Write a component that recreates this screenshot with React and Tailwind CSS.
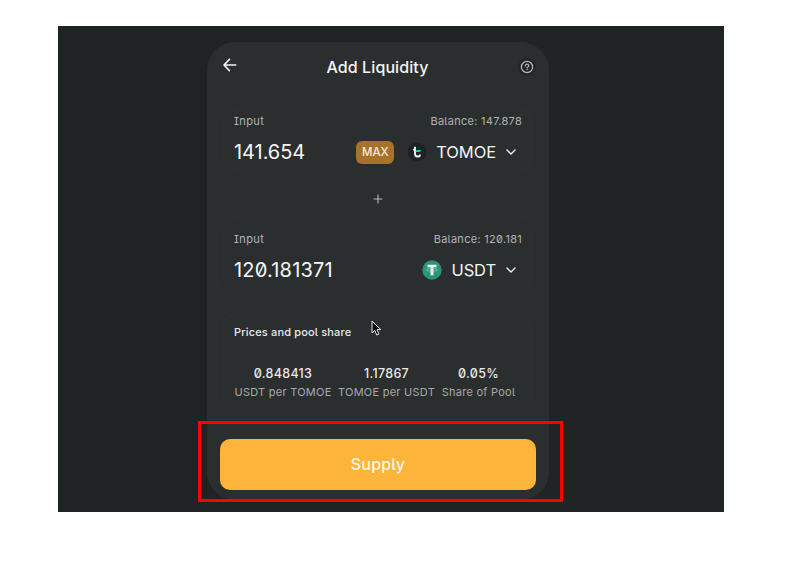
const BackArrow = () => (
  <svg width="14" height="14" viewBox="0 0 14 14" fill="none" stroke="#f3f4f4" strokeWidth="1.6" strokeLinecap="round" strokeLinejoin="round">
    <path d="M12.7 7H1.2M6.4 1.4L1 7l5.4 5.6" />
  </svg>
);

const HelpIcon = () => (
  <svg width="20" height="20" viewBox="0 0 20 20" fill="none" stroke="#b4b7b7" strokeWidth="1.2" strokeLinecap="round">
    <circle cx="10" cy="10" r="9" fill="#232627" stroke="none" />
    <circle cx="10" cy="10" r="5.6" />
    <path d="M8.4 8.8c0-2.2 3.3-2.1 3.3-.1 0 1.3-1.6 1.3-1.6 2.3M10.1 12.7v.1" />
  </svg>
);

const Chevron = () => (
  <svg width="10" height="6" viewBox="0 0 10 6" fill="none" stroke="#eceded" strokeWidth="1.4" strokeLinecap="round" strokeLinejoin="round">
    <path d="M1 1l4 4 4-4" />
  </svg>
);

const TomoeLogo = () => (
  <svg width="20" height="20" viewBox="0 0 20 20" fill="none">
    <circle cx="10" cy="10" r="9.5" fill="#1e2222" />
    <path d="M8 4.8v7c0 1.9.8 2.7 2.4 2.7h.8c1.3 0 1.8-.7 1.8-2" stroke="#f1f5f4" strokeWidth="1.9" />
    <path d="M6 7.7h2.4" stroke="#f1f5f4" strokeWidth="1.6" />
    <path d="M8.6 9.9c.3-1.4.9-1.9 1.9-1.9h3.5c-.2 1.4-.9 1.9-1.9 1.9z" fill="#14d3a2" />
  </svg>
);

const TetherLogo = () => (
  <svg width="20" height="20" viewBox="0 0 20 20" fill="none">
    <circle cx="10" cy="10" r="9.7" fill="#289777" />
    <path d="M5.5 4.8h9v2.5h-3v7.9h-3V7.3h-3z" fill="#f4faf8" />
    <ellipse cx="10" cy="9.9" rx="5.8" ry="1.3" stroke="#a3d0c1" strokeWidth=".6" />
  </svg>
);

const Pointer = () => (
  <svg width="11" height="17" viewBox="0 0 11 17">
    <path d="M1 1v12l2.8-2.6 1.9 4.6 2.2-.9-1.9-4.5h3.8z" fill="#070808" stroke="#e6e6e6" strokeWidth="1" strokeLinejoin="round" />
  </svg>
);

function TokenPanel({ balance, amount, amountClass, children }) {
  return (
    <section className="flex h-[72px] flex-col rounded-[16px] border border-[#292c2d] px-[13px]">
      <div className="mt-2 flex h-4 items-center justify-between text-[11px] text-[#afb2b3]">
        <span className="tracking-[0.4px]">Input</span>
        <span className="tracking-[0.28px]">{balance}</span>
      </div>
      <div className="mt-[11px] flex h-6 items-center justify-between">
        <span className={`text-[20px] text-[#f6f7f7] ${amountClass}`}>{amount}</span>
        <div className="flex items-center pr-1.5">{children}</div>
      </div>
    </section>
  );
}

function Stat({ value, label, className }) {
  return (
    <div className={`flex flex-col items-center whitespace-nowrap ${className}`}>
      <span className="text-[12.5px] leading-[18px] font-medium tracking-[0.3px] text-[#e9eaea]">{value}</span>
      <span className="text-[11px] leading-[18px] tracking-[0.25px] text-[#a6a9aa]">{label}</span>
    </div>
  );
}

export default function App() {
  return (
    <div className="h-[566px] w-[785px] overflow-hidden bg-white pt-[26px] pl-[58px] font-['Inter',sans-serif] [font-feature-settings:'zero','cv05','cv08']">
      <main className="relative h-[486px] w-[666px] bg-[#1f2323] pt-4 pl-[149px]">
        <div className="flex h-[458px] w-[342px] flex-col rounded-[28px] bg-[#2b2e2f] px-[13px]">
          <header className="-mr-px flex h-[49px] items-center justify-between pl-[3px]">
            <span className="-mt-1 w-4"><BackArrow /></span>
            <h1 className="mr-px text-[16px] font-medium tracking-[0.1px] text-[#f3f4f4]">Add Liquidity</h1>
            <HelpIcon />
          </header>

          <div className="mt-[13px]">
            <TokenPanel balance="Balance: 147.878" amount="141.654" amountClass="tracking-[-0.05px]">
              <span className="flex h-[23px] w-[38px] items-center justify-center rounded-[6px] bg-[#a8722b] pt-px text-[11.5px] font-medium text-[#f7ead8]">MAX</span>
              <span className="ml-[13px]"><TomoeLogo /></span>
              <span className="ml-[9px] text-[16.5px] tracking-[-0.1px] text-[#f3f4f4]">TOMOE</span>
              <span className="ml-2.5"><Chevron /></span>
            </TokenPanel>
          </div>

          <div className="flex h-[46px] items-center justify-center">
            <svg width="10" height="10" viewBox="0 0 10 10" stroke="#b4b7b7" strokeWidth="1.1"><path d="M5 .6v8.8M.6 5h8.8" /></svg>
          </div>

          <TokenPanel balance="Balance: 120.181" amount="120.181371" amountClass="tracking-[0.2px]">
            <TetherLogo />
            <span className="ml-[9px] text-[16.5px] tracking-[-0.1px] text-[#f3f4f4]">USDT</span>
            <span className="ml-2.5"><Chevron /></span>
          </TokenPanel>

          <section className="mt-[17px] flex h-[102px] flex-col rounded-[16px] border border-[#292c2d] px-[13px]">
            <h2 className="mt-3 text-[11px] leading-4 font-medium tracking-[0.16px] text-[#e9eaea]">Prices and pool share</h2>
            <div className="mt-[25px] flex">
              <Stat value="0.848413" label="USDT per TOMOE" className="w-[98px]" />
              <Stat value="1.17867" label="TOMOE per USDT" className="w-[109px]" />
              <Stat value="0.05%" label="Share of Pool" className="w-[75px]" />
            </div>
          </section>

          <button className="mt-[26px] h-[51px] rounded-[10px] bg-[#fdb43a] pb-0.5 text-[16px] font-medium tracking-[0.2px] text-[#fff6e4]">Supply</button>
        </div>

        <div className="absolute top-[395px] left-[140px] h-[81px] w-[365px] rounded-[1px] border-[3px] border-[#fe0000]" />
        <div className="absolute top-[294px] left-[313px]"><Pointer /></div>
      </main>
    </div>
  );
}
